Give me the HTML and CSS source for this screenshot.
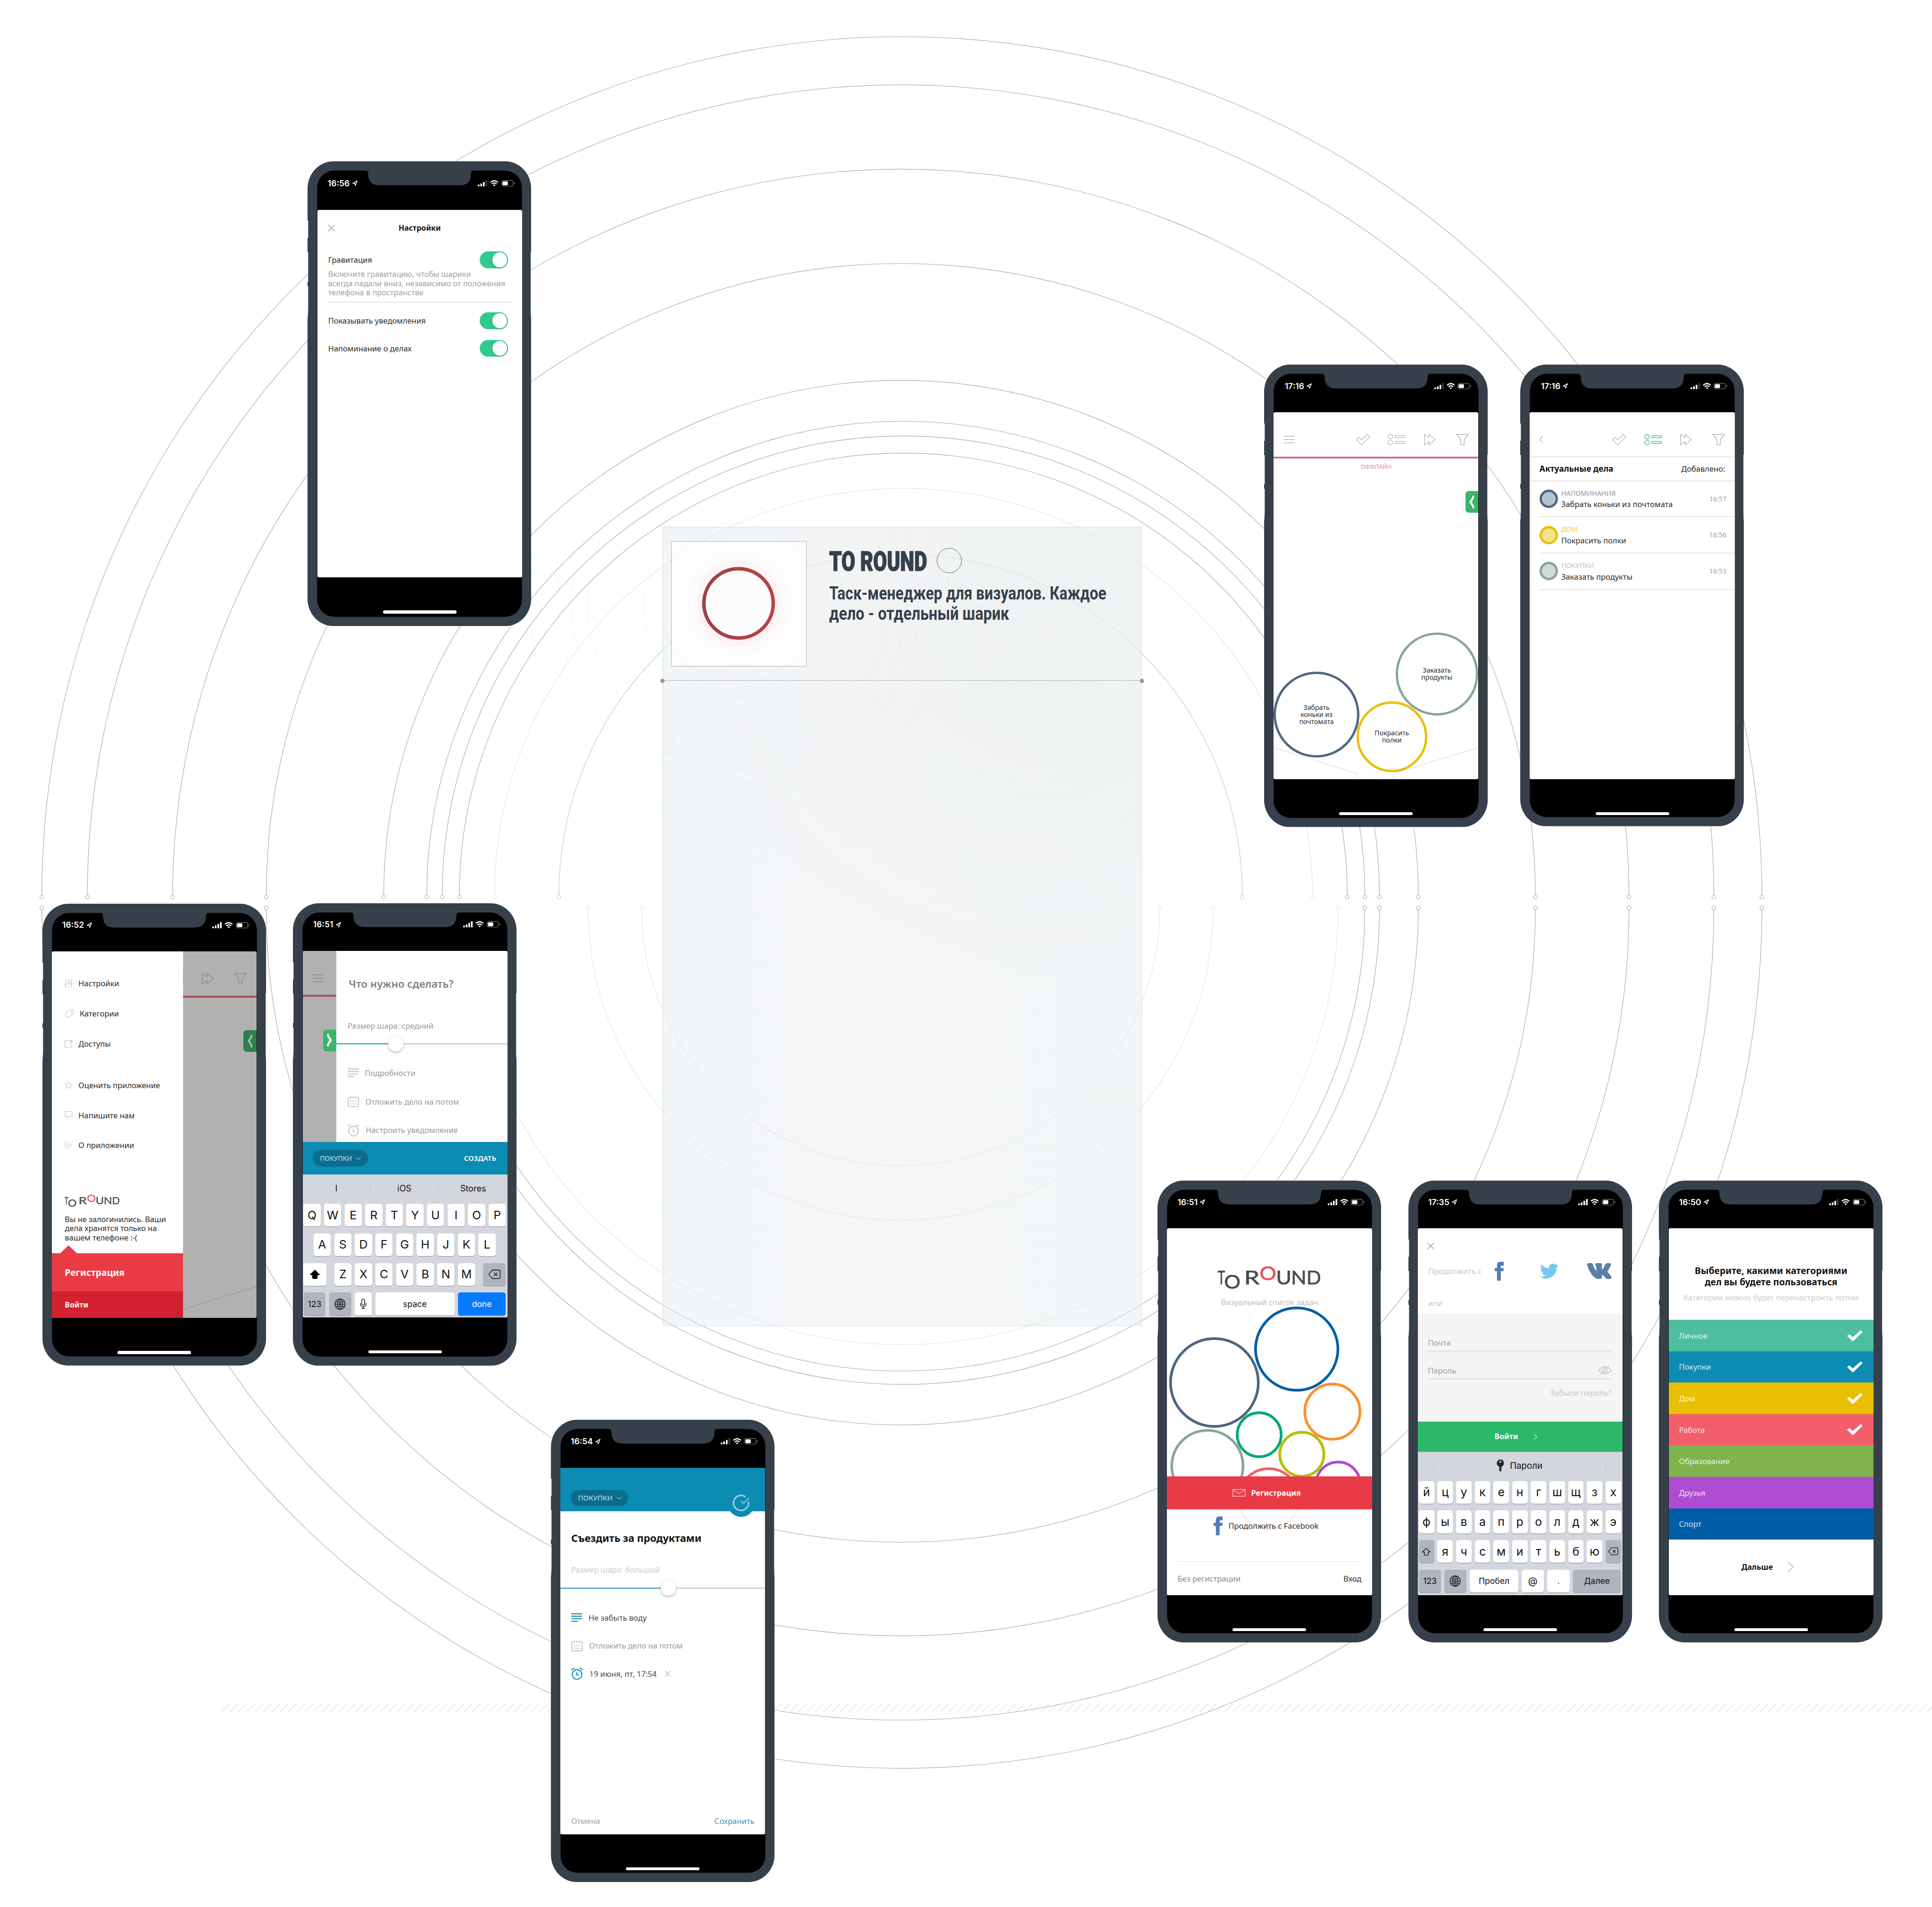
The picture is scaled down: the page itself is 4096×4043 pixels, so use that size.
FILE: index.html
```html
<!DOCTYPE html>
<html lang="ru">
<head>
<meta charset="utf-8">
<title>To Round</title>
<link rel="stylesheet" href="styles.css">
</head>
<body>
<svg class="defs" aria-hidden="true">
  <defs>
    <symbol id="frame" viewBox="0 0 535 1105" preserveAspectRatio="none">
      <path d="M62 0H473A62 65 0 0 1 535 65V215H534V350Q534 368 535 375V1040A62 65 0 0 1 473 1105H62A62 65 0 0 1 0 1040V375Q1 368 1.5 350V297H0V286H1.5V216H0V182H1.5V141H0V65A62 65 0 0 1 62 0Z" fill="#36404a"/>
      <rect x="23" y="22" width="490" height="1061" rx="41" ry="41" fill="#000"/>
      <path d="M139 21V22Q145 22 145 30C145 48 154 57 172 57H364C382 57 391 48 391 30Q391 22 397 22V21Z" fill="#36404a"/>
    </symbol>
    <symbol id="loc" viewBox="0 0 13 14"><path d="M1 7.5L12 1.5L7.5 13L6.5 8Z" fill="none" stroke="#fff" stroke-width="1.8" stroke-linejoin="round"/></symbol>
    <symbol id="sig4" viewBox="0 0 23 15"><g fill="#fff"><rect y="10.5" width="4" height="4.5" rx="1"/><rect x="6.2" y="7.8" width="4" height="7.2" rx="1"/><rect x="12.4" y="4.2" width="4" height="10.8" rx="1"/><rect x="18.6" y="0" width="4" height="15" rx="1"/></g></symbol>
    <symbol id="sig3" viewBox="0 0 23 15"><g fill="#fff"><rect y="10.5" width="4" height="4.5" rx="1"/><rect x="6.2" y="7.8" width="4" height="7.2" rx="1"/><rect x="12.4" y="4.2" width="4" height="10.8" rx="1"/><rect x="18.6" y="0" width="4" height="15" rx="1" fill="#3a3a3a"/></g></symbol>
    <symbol id="wifi" viewBox="0 0 20 15"><g fill="none" stroke="#fff" stroke-width="2.7"><path d="M1 5.2Q10 -2.6 19 5.2"/><path d="M4.3 9.1Q10 4 15.7 9.1"/></g><path d="M7 11.6Q10 9.2 13 11.6L10 14.8Z" fill="#fff"/></symbol>
    <symbol id="batt" viewBox="0 0 33 15"><rect x=".8" y=".8" width="27.6" height="13.4" rx="4" fill="none" stroke="#7a7a7a" stroke-width="1.4"/><rect x="2.8" y="2.8" width="12.6" height="9.4" rx="2" fill="#fff"/><path d="M30.4 5V10Q32.6 9 32.6 7.500Q32.6 6 30.4 5Z" fill="#7a7a7a"/></symbol>
    <symbol id="burger" viewBox="0 0 25 20"><path d="M0 2H25M0 10H25M0 18H25" stroke="currentColor" stroke-width="2"/></symbol>
    <symbol id="back" viewBox="0 0 25 20"><path d="M9.500 2.500L1 10L9.500 17.500" stroke="currentColor" stroke-width="1.8" fill="none"/></symbol>
    <symbol id="check" viewBox="0 0 34 27"><path d="M1 14L7.200 8L13 14L26.600 1L33 7L13.200 26Z" stroke="currentColor" stroke-width="1.7" stroke-linejoin="round" fill="none"/></symbol>
    <symbol id="list" viewBox="0 0 42 27"><g stroke="currentColor" stroke-width="1.8" fill="none"><circle cx="6.500" cy="6.500" r="5.500"/><circle cx="6.500" cy="20.500" r="5.500"/><rect x="18" y="4" width="23" height="4.800" rx="1"/><rect x="18" y="18" width="23" height="4.800" rx="1"/></g></symbol>
    <symbol id="ff" viewBox="0 0 28 27"><path d="M1 1L12 9V1L27 13.500L12 26V18L1 26Z" stroke="currentColor" stroke-width="1.8" stroke-linejoin="round" fill="none"/></symbol>
    <symbol id="funnel" viewBox="0 0 31 27"><path d="M1 1H30L19.500 13V26H11.500V13Z" stroke="currentColor" stroke-width="1.8" stroke-linejoin="round" fill="none"/></symbol>
    <symbol id="close" viewBox="0 0 18 18"><path d="M1 1L17 17M17 1L1 17" stroke="currentColor" stroke-width="2.200"/></symbol>
    <symbol id="chev" viewBox="0 0 12 32"><path d="M9.500 3Q9 8 2.500 16Q9 24 9.500 29" stroke="currentColor" stroke-width="4.600" stroke-linecap="round" stroke-linejoin="round" fill="none"/></symbol>
    <symbol id="down" viewBox="0 0 13 7"><path d="M.8 1Q4 5 6.500 5.500Q9 5 12.200 1" stroke="currentColor" stroke-width="1.500" fill="none"/></symbol>
    <symbol id="notes" viewBox="0 0 26 22"><path d="M0 1.500H26M0 7.500H26M0 13.500H26M0 19.500H16" stroke="currentColor" stroke-width="2.400"/></symbol>
    <symbol id="cal" viewBox="0 0 28 28"><g stroke="currentColor" fill="none" stroke-width="2.400"><path d="M5 4H3.500Q1.500 4 1.500 6V24Q1.500 26.500 4 26.500H24Q26.500 26.500 26.500 24V6Q26.500 4 24.500 4H23M10 4H18M7.500 1V7M20.500 1V7"/><path d="M6.500 13.500H21.500M6.500 20H21.500" stroke-dasharray="3.500 2.250"/></g></symbol>
    <symbol id="alarm" viewBox="0 0 28 30"><g stroke="currentColor" fill="none" stroke-width="2.400"><circle cx="14" cy="17" r="11.500"/><path d="M13.500 11V18H18.500"/><path d="M1 6.500Q3.500 2.500 8 1.500M27 6.500Q24.500 2.500 20 1.500"/></g></symbol>
    <symbol id="tick" viewBox="0 0 37 27"><path d="M0 14L5.500 9.500L13.500 17L33 0L37 4.500L13.800 27Z" fill="#fff"/></symbol>
    <symbol id="fb" viewBox="6 0 12 24" preserveAspectRatio="none"><path d="M9 8h-3v4h3v12h5v-12h3.642l.358-4h-4v-1.667c0-.955.192-1.333 1.115-1.333h2.885v-5h-3.808c-3.596 0-5.192 1.583-5.192 4.615v3.385z" fill="#5479bd"/></symbol>
    <symbol id="tw" viewBox="0 2.200 24 19.600" preserveAspectRatio="none"><path d="M23.953 4.57a10 10 0 01-2.825.775 4.958 4.958 0 002.163-2.723c-.951.555-2.005.959-3.127 1.184a4.92 4.92 0 00-8.384 4.482C7.69 8.095 4.067 6.13 1.64 3.162a4.822 4.822 0 00-.666 2.475c0 1.71.87 3.213 2.188 4.096a4.904 4.904 0 01-2.228-.616v.06a4.923 4.923 0 003.946 4.827 4.996 4.996 0 01-2.212.085 4.936 4.936 0 004.604 3.417 9.867 9.867 0 01-6.102 2.105c-.39 0-.779-.023-1.17-.067a13.995 13.995 0 007.557 2.209c9.053 0 13.998-7.496 13.998-13.985 0-.21 0-.42-.015-.63A9.935 9.935 0 0024 4.59z" fill="#76c7ef"/></symbol>
    <symbol id="vk" viewBox="2 80 572 352" preserveAspectRatio="none"><path d="M545 117.7c3.7-12.5 0-21.7-17.8-21.7h-58.9c-15 0-21.900 7.900-25.600 16.700 0 0-30 73.100-72.400 120.500-13.700 13.700-20 18.100-27.500 18.100-3.700 0-9.400-4.400-9.400-16.900V117.700c0-15-4.200-21.700-16.600-21.700h-92.600c-9.400 0-15 7-15 13.500 0 14.200 21.200 17.500 23.400 57.500v86.800c0 19-3.400 22.500-10.900 22.500-20 0-68.600-73.400-97.400-157.400-5.800-16.300-11.500-22.900-26.600-22.900H38.800c-16.800 0-20.200 7.900-20.200 16.700 0 15.600 20 93.100 93.100 195.500C160.400 378.100 229 416 291.400 416c37.500 0 42.100-8.400 42.100-22.900 0-66.800-3.400-73.100 15.400-73.100 8.700 0 23.700 4.400 58.700 38.100 40 40 46.600 57.900 69 57.900h58.900c16.800 0 25.300-8.400 20.400-25-11.200-34.900-86.900-106.700-90.300-111.500-8.700-11.200-6.200-16.200 0-26.200.1-.1 72-101.300 79.400-135.600z" fill="#5a7fa8" stroke="#5a7fa8" stroke-width="32" stroke-linejoin="round"/></symbol>
    <symbol id="globe" viewBox="0 0 28 28"><g fill="none" stroke="#1a1a1a" stroke-width="1.700"><circle cx="14" cy="14" r="12.800"/><ellipse cx="14" cy="14" rx="6" ry="12.800"/><path d="M14 1V27M1 14H27M3.500 7.500Q14 11.500 24.500 7.500M3.500 20.500Q14 16.500 24.500 20.500"/></g></symbol>
    <symbol id="del" viewBox="0 0 31 24"><g fill="none" stroke="#1a1a1a" stroke-width="1.800"><path d="M10 1.500H26Q29.500 1.500 29.500 5V19Q29.500 22.500 26 22.500H10L1.500 12Z" stroke-linejoin="round"/><path d="M14.500 8L22.500 16M22.500 8L14.500 16"/></g></symbol>
    <symbol id="mic" viewBox="0 0 16 26"><g fill="none" stroke="#111" stroke-width="1.700"><rect x="4.500" y="1" width="7" height="15" rx="3.500"/><path d="M1 11V13Q1 20 8 20T15 13V11M8 20V25M4 25H12"/></g></symbol>
    <symbol id="shift" viewBox="0 0 26 24"><path d="M13 2L2 13H7.500V20.500Q7.500 22 9 22H17Q18.500 22 18.500 20.500V13H24Z" stroke="#000" stroke-width="1.800" stroke-linejoin="round"/></symbol>
    <symbol id="logo" viewBox="0 0 245 57">
      <g font-family="Lato, sans-serif" font-size="46.500" fill="#4a4a4c" stroke="#4a4a4c" stroke-width=".8">
        <text x="-1" y="45.300" textLength="18" lengthAdjust="spacingAndGlyphs">T</text>
        <text x="15" y="55" textLength="39" lengthAdjust="spacingAndGlyphs">O</text>
        <text x="62.500" y="45.300" textLength="37" lengthAdjust="spacingAndGlyphs">R</text>
        <text x="100" y="34.500" textLength="40" lengthAdjust="spacingAndGlyphs" fill="#ea4f56" stroke="#ea4f56">O</text>
        <text x="139" y="45.300" textLength="37" lengthAdjust="spacingAndGlyphs">U</text>
        <text x="175" y="45.300" textLength="37" lengthAdjust="spacingAndGlyphs">N</text>
        <text x="212" y="45.300" textLength="35" lengthAdjust="spacingAndGlyphs">D</text>
      </g>
    </symbol>
    <pattern id="hatch" x="530" y="4075.700" width="20" height="20" patternUnits="userSpaceOnUse"><path d="M.3 19.700L19.700 .3" stroke="#cdd2d3" stroke-width="1.200"/></pattern>
    <linearGradient id="ringGrad"><stop offset="0" stop-color="#9a4345"/><stop offset="1" stop-color="#bb4244"/></linearGradient>
    <radialGradient id="glow"><stop offset=".5" stop-color="#ffdada" stop-opacity="0"/><stop offset=".72" stop-color="#ffdada" stop-opacity=".3"/><stop offset="1" stop-color="#ffdada" stop-opacity="0"/></radialGradient>
  </defs>
</svg>

<main class="board">
  <svg class="orbits" viewBox="0 0 4622 4562">
    <rect x="530" y="4075.700" width="4092" height="20" fill="url(#hatch)"/>
    <g class="orbit">
      <path d="M100 2142A2057.500 2055 0 0 1 4215 2142"/>
      <path d="M209 2142A1945.500 1939 0 0 1 4100 2142"/>
      <path d="M413 2142A1742 1738 0 0 1 3897 2142"/>
      <path d="M637 2142A1518 1512 0 0 1 3673 2142"/>
      <path d="M918 2142A1237.500 1232 0 0 1 3393 2142"/>
      <path d="M1021 2142A1139.500 1134 0 0 1 3300 2142"/>
      <path d="M1058 2142A1103.500 1099 0 0 1 3265 2142"/>
      <path d="M1099 2142A1062 1058 0 0 1 3223 2142"/>
      <path d="M100 2176A2057.500 2055 0 0 0 4215 2176"/>
      <path d="M209 2176A1945.500 1939 0 0 0 4100 2176"/>
      <path d="M413 2176A1742 1738 0 0 0 3897 2176"/>
      <path d="M637 2176A1518 1514 0 0 0 3673 2176"/>
      <path d="M918 2176A1237.500 1233 0 0 0 3393 2176"/>
      <path d="M1021 2176A1139.500 1136 0 0 0 3300 2176"/>
      <path d="M1050 2176A1107.500 1104 0 0 0 3265 2176"/>
      <g>
        <circle cx="100" cy="2146" r="4.500"/><circle cx="209" cy="2146" r="4.500"/><circle cx="413" cy="2146" r="4.500"/><circle cx="637" cy="2146" r="4.500"/><circle cx="918" cy="2146" r="4.500"/><circle cx="1021" cy="2146" r="4.500"/><circle cx="1058" cy="2146" r="4.500"/><circle cx="1099" cy="2146" r="4.500"/>
        <circle cx="4215" cy="2146" r="4.500"/><circle cx="4100" cy="2146" r="4.500"/><circle cx="3897" cy="2146" r="4.500"/><circle cx="3673" cy="2146" r="4.500"/><circle cx="3393" cy="2146" r="4.500"/><circle cx="3300" cy="2146" r="4.500"/><circle cx="3265" cy="2146" r="4.500"/><circle cx="3223" cy="2146" r="4.500"/>
        <circle cx="100" cy="2172" r="4.500"/><circle cx="637" cy="2172" r="4.500"/><circle cx="4215" cy="2172" r="4.500"/><circle cx="4100" cy="2172" r="4.500"/><circle cx="3897" cy="2172" r="4.500"/><circle cx="3673" cy="2172" r="4.500"/><circle cx="3393" cy="2172" r="4.500"/><circle cx="3300" cy="2172" r="4.500"/><circle cx="3265" cy="2172" r="4.500"/>
      </g>
    </g>
    <g class="orbit mid">
      <path d="M1337 2142A817.500 817 0 0 1 2972 2142"/>
      <circle cx="1337" cy="2146" r="4.500"/><circle cx="2972" cy="2146" r="4.500"/>
    </g>
    <g class="orbit light">
      <path d="M1535 2176A619.500 613 0 0 0 2774 2176"/>
      <path d="M1407 2176A747.500 743 0 0 0 2902 2176"/>
      <path d="M1115 2176A1043 1041 0 0 0 3201 2176"/>
      <path d="M1183 2142A978.500 974 0 0 1 3140 2142"/>
      <circle cx="1183" cy="2146" r="4.500"/><circle cx="3140" cy="2146" r="4.500"/>
      <circle cx="1535" cy="2172" r="4.500"/><circle cx="2774" cy="2172" r="4.500"/><circle cx="1407" cy="2172" r="4.500"/><circle cx="2902" cy="2172" r="4.500"/><circle cx="3201" cy="2172" r="4.500"/>
    </g>
  </svg>

  <section class="card">
    <header class="card-head">
      <div class="card-logo">
        <svg viewBox="0 0 323 299"><circle cx="161" cy="149" r="122" fill="url(#glow)"/><circle cx="161" cy="149" r="83.500" fill="#fdfcfc" stroke="url(#ringGrad)" stroke-width="8.500"/></svg>
      </div>
      <div class="card-copy">
        <h1><span>TO ROUND</span><i></i></h1>
        <p><span>Таск-менеджер для визуалов. Каждое</span><br><span>дело - отдельный шарик</span></p>
      </div>
    </header>
  </section>

  <svg class="ripples" viewBox="0 0 1040 1040">
    <g fill="none" stroke="#8a979f" stroke-width="1.400" opacity=".07">
      <path d="M524 1022A502 502 0 1 0 308 975"/>
      <path d="M524 952A432 432 0 1 0 337 911.500"/>
      <path d="M524 920A400 400 0 1 0 351 882.500"/>
      <path d="M524 881.500A361.500 361.500 0 1 0 367 847.600"/>
      <path d="M524 748A228 228 0 1 0 424 726.600"/>
      <path d="M524 709A189 189 0 1 0 440 691.300"/>
      <path d="M524 640A120 120 0 1 0 469 628.800"/>
      <path d="M524 618A98 98 0 1 0 479 608.800"/>
      <circle cx="520" cy="1022" r="4.500"/><circle cx="304" cy="973" r="4.500"/><circle cx="520" cy="952" r="4.500"/><circle cx="333" cy="909" r="4.500"/><circle cx="520" cy="920" r="4.500"/><circle cx="347" cy="880" r="4.500"/><circle cx="520" cy="881" r="4.500"/><circle cx="363" cy="845" r="4.500"/><circle cx="520" cy="748" r="4.500"/><circle cx="421" cy="724" r="4.500"/><circle cx="520" cy="709" r="4.500"/><circle cx="437" cy="689" r="4.500"/><circle cx="520" cy="640" r="4.500"/><circle cx="520" cy="618" r="4.500"/>
    </g>
  </svg>

  <article class="phone p-settings">
    <svg class="frame"><use href="#frame"/></svg>
    <div class="status"><b>16:56</b><svg class="s-loc"><use href="#loc"/></svg><svg class="s-sig"><use href="#sig3"/></svg><svg class="s-wifi"><use href="#wifi"/></svg><svg class="s-batt"><use href="#batt"/></svg></div>
    <div class="app">
      <div class="set-bar"><svg class="ic-close"><use href="#close"/></svg><b>Настройки</b><span></span></div>
      <div class="set-row first"><span>Гравитация</span><i class="toggle"></i></div>
      <p class="set-note">Включите гравитацию, чтобы шарики<br>всегда падали вниз, независимо от положения<br>телефона в пространстве</p>
      <div class="set-row"><span>Показывать уведомления</span><i class="toggle"></i></div>
      <div class="set-row last"><span>Напоминание о делах</span><i class="toggle"></i></div>
    </div>
    <div class="home"></div>
  </article>

  <article class="phone p-balls">
    <svg class="frame"><use href="#frame"/></svg>
    <div class="status"><b>17:16</b><svg class="s-loc"><use href="#loc"/></svg><svg class="s-sig"><use href="#sig3"/></svg><svg class="s-wifi"><use href="#wifi"/></svg><svg class="s-batt"><use href="#batt"/></svg></div>
    <div class="app">
      <div class="tools"><svg class="t-menu"><use href="#burger"/></svg><svg class="t-check"><use href="#check"/></svg><svg class="t-list"><use href="#list"/></svg><svg class="t-ff"><use href="#ff"/></svg><svg class="t-fun"><use href="#funnel"/></svg></div>
      <div class="redline"></div>
      <div class="offline">ОФФЛАЙН</div>
      <div class="tab tab-right"><svg><use href="#chev"/></svg></div>
      <svg class="floor" viewBox="0 0 490 877"><path d="M0 802L200.700 864.500V877M490 802L287.500 864.500V877"/></svg>
      <div class="ball ball-navy">Забрать<br>коньки из<br>почтомата</div>
      <div class="ball ball-yellow">Покрасить<br>полки</div>
      <div class="ball ball-sage">Заказать<br>продукты</div>
    </div>
    <div class="home"></div>
  </article>

  <article class="phone p-list">
    <svg class="frame"><use href="#frame"/></svg>
    <div class="status"><b>17:16</b><svg class="s-loc"><use href="#loc"/></svg><svg class="s-sig"><use href="#sig3"/></svg><svg class="s-wifi"><use href="#wifi"/></svg><svg class="s-batt"><use href="#batt"/></svg></div>
    <div class="app">
      <div class="tools"><svg class="t-menu"><use href="#back"/></svg><svg class="t-check"><use href="#check"/></svg><svg class="t-list on"><use href="#list"/></svg><svg class="t-ff"><use href="#ff"/></svg><svg class="t-fun"><use href="#funnel"/></svg></div>
      <div class="list-head"><b>Актуальные дела</b><span>Добавлено:</span></div>
      <div class="task navy"><i></i><div><small>НАПОМИНАНИЯ</small>Забрать коньки из почтомата</div><time>16:57</time></div>
      <div class="task yellow"><i></i><div><small>ДОМ</small>Покрасить полки</div><time>16:56</time></div>
      <div class="task sage"><i></i><div><small>ПОКУПКИ</small>Заказать продукты</div><time>16:53</time></div>
    </div>
    <div class="home"></div>
  </article>

  <article class="phone p-menu">
    <svg class="frame"><use href="#frame"/></svg>
    <div class="status"><b>16:52</b><svg class="s-loc"><use href="#loc"/></svg><svg class="s-sig"><use href="#sig4"/></svg><svg class="s-wifi"><use href="#wifi"/></svg><svg class="s-batt"><use href="#batt"/></svg></div>
    <div class="app dim">
      <div class="tools"><svg class="t-menu"><use href="#burger"/></svg><svg class="t-check"><use href="#check"/></svg><svg class="t-list"><use href="#list"/></svg><svg class="t-ff"><use href="#ff"/></svg><svg class="t-fun"><use href="#funnel"/></svg></div>
      <div class="redline"></div>
      <div class="tab tab-right"><svg><use href="#chev"/></svg></div>
      <svg class="floor" viewBox="0 0 490 877"><path d="M490 802L287.500 864.500V877"/></svg>
      <div class="drawer">
        <nav>
          <a><svg viewBox="0 0 19 20"><path d="M3 0V8M3 12V20M9.500 0V5M9.500 9V20M16 0V8M16 12V20" stroke="currentColor" stroke-width="2" stroke-dasharray="3 1.500"/><circle cx="3" cy="12" r="2.600" fill="currentColor"/><circle cx="9.500" cy="7.500" r="2.300" fill="currentColor"/><circle cx="16" cy="11" r="2.600" fill="currentColor"/></svg>Настройки</a>
          <a class="wide"><svg viewBox="0 0 22 20"><path d="M1 12L10 2Q11 1 12.500 1H18Q21 1 21 4V8Q21 9 20 10L10 19Q8 20 6 18L1.500 14Q.5 13 1 12Z" fill="none" stroke="currentColor" stroke-width="1.500"/><circle cx="15.500" cy="6" r="1.800" fill="currentColor"/></svg>Категории</a>
          <a><svg viewBox="0 0 19 20"><path d="M10 2H4Q1 2 1 5V16Q1 19 4 19H14Q17 19 17 16V9" fill="none" stroke="currentColor" stroke-width="1.500"/><circle cx="15.500" cy="4" r="3.200" fill="currentColor"/></svg>Доступы</a>
          <a class="gap"><svg viewBox="0 0 20 20"><path d="M10 1.500L12.600 7.300L19 8L14.200 12.200L15.600 18.500L10 15.200L4.400 18.500L5.800 12.200L1 8L7.400 7.300Z" fill="none" stroke="currentColor" stroke-width="1.500"/></svg>Оценить приложение</a>
          <a><svg viewBox="0 0 19 20"><path d="M4 1.500H15Q18 1.500 18 4.500V10.500Q18 13.500 15 13.500H10L6 18V13.500H4Q1 13.500 1 10.500V4.500Q1 1.500 4 1.500Z" fill="none" stroke="currentColor" stroke-width="1.500"/></svg>Напишите нам</a>
          <a><svg viewBox="0 0 19 20"><path d="M0 3H7M0 7.500H17M0 12H17M0 16.500H12" stroke="currentColor" stroke-width="1.500"/></svg>О приложении</a>
        </nav>
        <svg class="logo-s"><use href="#logo"/></svg>
        <p>Вы не залогинились. Ваши<br>дела хранятся только на<br>вашем телефоне :-(</p>
        <div class="reg">Регистрация</div>
        <div class="login">Войти</div>
      </div>
    </div>
    <div class="home"></div>
  </article>

  <article class="phone p-new">
    <svg class="frame"><use href="#frame"/></svg>
    <div class="status"><b>16:51</b><svg class="s-loc"><use href="#loc"/></svg><svg class="s-sig"><use href="#sig4"/></svg><svg class="s-wifi"><use href="#wifi"/></svg><svg class="s-batt"><use href="#batt"/></svg></div>
    <div class="app">
      <div class="split">
        <div class="strip"><div class="tools"><svg class="t-menu"><use href="#burger"/></svg></div><div class="redline"></div><div class="tab tab-left"><svg><use href="#chev"/></svg></div></div>
        <div class="sheet">
          <h2>Что нужно сделать?</h2>
          <div class="size">Размер шара: средний</div>
          <div class="slider"><i></i><u></u><s></s></div>
          <div class="opt"><svg class="o-notes"><use href="#notes"/></svg>Подробности</div>
          <div class="opt"><svg class="o-cal"><use href="#cal"/></svg>Отложить дело на потом</div>
          <div class="opt"><svg class="o-alarm"><use href="#alarm"/></svg>Настроить уведомление</div>
        </div>
      </div>
      <div class="create"><span class="pill">ПОКУПКИ<svg><use href="#down"/></svg></span><b>СОЗДАТЬ</b></div>
      <div class="kb kb-en">
        <div class="hints"><span>I</span><span>iOS</span><span>Stores</span></div>
        <div class="keys"><kbd>Q</kbd><kbd>W</kbd><kbd>E</kbd><kbd>R</kbd><kbd>T</kbd><kbd>Y</kbd><kbd>U</kbd><kbd>I</kbd><kbd>O</kbd><kbd>P</kbd></div>
        <div class="keys"><kbd>A</kbd><kbd>S</kbd><kbd>D</kbd><kbd>F</kbd><kbd>G</kbd><kbd>H</kbd><kbd>J</kbd><kbd>K</kbd><kbd>L</kbd></div>
        <div class="keys spread"><kbd class="k55"><svg class="k-shift"><use href="#shift"/></svg></kbd><div class="keys"><kbd>Z</kbd><kbd>X</kbd><kbd>C</kbd><kbd>V</kbd><kbd>B</kbd><kbd>N</kbd><kbd>M</kbd></div><kbd class="k55 alt"><svg class="k-del"><use href="#del"/></svg></kbd></div>
        <div class="keys"><kbd class="k53 alt txt">123</kbd><kbd class="k53 alt"><svg class="k-globe"><use href="#globe"/></svg></kbd><kbd><svg class="k-mic"><use href="#mic"/></svg></kbd><kbd class="k189 txt">space</kbd><kbd class="k114 blue txt">done</kbd></div>
      </div>
    </div>
    <div class="home"></div>
  </article>

  <article class="phone p-edit">
    <svg class="frame"><use href="#frame"/></svg>
    <div class="status"><b>16:54</b><svg class="s-loc"><use href="#loc"/></svg><svg class="s-sig"><use href="#sig3"/></svg><svg class="s-wifi"><use href="#wifi"/></svg><svg class="s-batt"><use href="#batt"/></svg></div>
    <div class="app edit">
      <div class="edit-head"><span class="pill">ПОКУПКИ<svg><use href="#down"/></svg></span>
        <svg class="done" viewBox="0 0 66 66"><circle cx="33" cy="33" r="32.500" fill="#0c8bb3"/><path d="M43.500 17.500A18 18 0 1 0 50.500 29" fill="none" stroke="#a5d3e3" stroke-width="3.400"/><path d="M33 26.500L38.500 33L51.500 20.500" fill="none" stroke="#6dbad2" stroke-width="3.400"/></svg></div>
      <h2>Съездить за продуктами</h2>
      <div class="size">Размер шара: большой</div>
      <div class="slider"><i></i><u></u><s></s></div>
      <div class="opt set"><svg class="o-notes"><use href="#notes"/></svg>Не забыть воду</div>
      <div class="opt"><svg class="o-cal"><use href="#cal"/></svg>Отложить дело на потом</div>
      <div class="opt set"><svg class="o-alarm"><use href="#alarm"/></svg>19 июня, пт, 17:54<svg class="o-x"><use href="#close"/></svg></div>
      <div class="edit-foot"><span>Отмена</span><a>Сохранить</a></div>
    </div>
    <div class="home"></div>
  </article>

  <article class="phone p-start">
    <svg class="frame"><use href="#frame"/></svg>
    <div class="status"><b>16:51</b><svg class="s-loc"><use href="#loc"/></svg><svg class="s-sig"><use href="#sig4"/></svg><svg class="s-wifi"><use href="#wifi"/></svg><svg class="s-batt"><use href="#batt"/></svg></div>
    <div class="app start">
      <svg class="balls" viewBox="0 0 490 877">
        <g fill="none" stroke-width="6.400">
          <circle cx="113.600" cy="369" r="105" stroke="#4c6880"/>
          <circle cx="310.500" cy="289" r="98.500" stroke="#005ea6"/>
          <circle cx="395.800" cy="438.800" r="66" stroke="#fd8f2b"/>
          <circle cx="96.800" cy="568.800" r="85.300" stroke="#88a59c"/>
          <circle cx="220.700" cy="494" r="52.600" stroke="#04a777"/>
          <circle cx="322.700" cy="540.700" r="52.800" stroke="#b3bf05"/>
          <circle cx="243.400" cy="647.500" r="72.300" stroke="#f25e6a"/>
          <circle cx="409.500" cy="612" r="52.800" stroke="#ae4bd1"/>
        </g>
      </svg>
      <svg class="logo-l"><use href="#logo"/></svg>
      <div class="tagline">Визуальный список задач</div>
      <div class="signup"><svg viewBox="0 0 31 18"><path d="M.8 .8H30.200V17.200H.8ZM.8 .8L15.500 11L30.200 .8" fill="none" stroke="#fbd3d5" stroke-width="1.500"/></svg>Регистрация</div>
      <div class="below">
        <div class="fb-row"><svg><use href="#fb"/></svg>Продолжить с Facebook</div>
        <div class="start-foot"><span>Без регистрации</span><b>Вход</b></div>
      </div>
    </div>
    <div class="home"></div>
  </article>

  <article class="phone p-login">
    <svg class="frame"><use href="#frame"/></svg>
    <div class="status"><b>17:35</b><svg class="s-loc"><use href="#loc"/></svg><svg class="s-sig"><use href="#sig4"/></svg><svg class="s-wifi"><use href="#wifi"/></svg><svg class="s-batt"><use href="#batt"/></svg></div>
    <div class="app">
      <div class="social">
        <svg class="ic-close"><use href="#close"/></svg>
        <div class="social-row"><span>Продолжить с</span><svg class="i-fb"><use href="#fb"/></svg><svg class="i-tw"><use href="#tw"/></svg><svg class="i-vk"><use href="#vk"/></svg></div>
        <div class="or">или</div>
      </div>
      <div class="form">
        <div class="field">Почта</div>
        <div class="field">Пароль<svg viewBox="0 0 34 25"><g fill="none" stroke="currentColor" stroke-width="2.200"><path d="M1.500 13Q9 3.500 17 3.500T32.500 13Q25 21.500 17 21.500T1.500 13Z"/><circle cx="17" cy="12.500" r="6"/><path d="M6.500 23.500L28 1M13 16L21 8.500"/></g></svg></div>
        <div class="forgot">Забыли пароль?</div>
      </div>
      <div class="enter">Войти<svg viewBox="0 0 8 14"><path d="M.8 .8L7 7L.8 13.200" fill="none" stroke="#d5f0e1" stroke-width="1.400"/></svg></div>
      <div class="kb kb-ru">
        <div class="hints"><span></span><span><svg viewBox="0 0 18 30"><path d="M9 0A9 9 0 0 1 12.500 17.200V19.500L10.500 21L12.500 23L10.500 25L12.500 27L9.500 30L6.500 27.500V17.500A9 9 0 0 1 9 0ZM9 3A2.500 2.500 0 1 0 9 8A2.500 2.500 0 1 0 9 3Z" fill="#222529" fill-rule="evenodd"/></svg>Пароли</span><span></span></div>
        <div class="keys"><kbd>й</kbd><kbd>ц</kbd><kbd>у</kbd><kbd>к</kbd><kbd>е</kbd><kbd>н</kbd><kbd>г</kbd><kbd>ш</kbd><kbd>щ</kbd><kbd>з</kbd><kbd>х</kbd></div>
        <div class="keys"><kbd>ф</kbd><kbd>ы</kbd><kbd>в</kbd><kbd>а</kbd><kbd>п</kbd><kbd>р</kbd><kbd>о</kbd><kbd>л</kbd><kbd>д</kbd><kbd>ж</kbd><kbd>э</kbd></div>
        <div class="keys"><kbd class="alt"><svg class="k-shift line"><use href="#shift"/></svg></kbd><kbd>я</kbd><kbd>ч</kbd><kbd>с</kbd><kbd>м</kbd><kbd>и</kbd><kbd>т</kbd><kbd>ь</kbd><kbd>б</kbd><kbd>ю</kbd><kbd class="alt"><svg class="k-del"><use href="#del"/></svg></kbd></div>
        <div class="keys"><kbd class="k53 alt txt">123</kbd><kbd class="k54 alt"><svg class="k-globe"><use href="#globe"/></svg></kbd><kbd class="k116 txt">Пробел</kbd><kbd class="k54 at">@</kbd><kbd class="k54 txt">.</kbd><kbd class="k114 alt txt">Далее</kbd></div>
      </div>
    </div>
    <div class="home"></div>
  </article>

  <article class="phone p-cats">
    <svg class="frame"><use href="#frame"/></svg>
    <div class="status"><b>16:50</b><svg class="s-loc"><use href="#loc"/></svg><svg class="s-sig"><use href="#sig3"/></svg><svg class="s-wifi"><use href="#wifi"/></svg><svg class="s-batt"><use href="#batt"/></svg></div>
    <div class="app">
      <div class="cats-head"><h2>Выберите, какими категориями<br>дел вы будете пользоваться</h2><p>Категории можно будет перенастроить потом</p></div>
      <ul class="cats">
        <li class="c1">Личное<svg><use href="#tick"/></svg></li>
        <li class="c2">Покупки<svg><use href="#tick"/></svg></li>
        <li class="c3">Дом<svg><use href="#tick"/></svg></li>
        <li class="c4">Работа<svg><use href="#tick"/></svg></li>
        <li class="c5">Образование</li>
        <li class="c6">Друзья</li>
        <li class="c7">Спорт</li>
      </ul>
      <div class="next">Дальше<svg viewBox="0 0 16 28"><path d="M1 1L15 14L1 27" fill="none" stroke="#bbb" stroke-width="1.900"/></svg></div>
    </div>
    <div class="home"></div>
  </article>
</main>
</body>
</html>
```
FILE: styles.css
```css
* { box-sizing: border-box; }
html, body { margin: 0; }
body {
  width: 4096px;
  height: 4043px;
  overflow: hidden;
  background: #fff;
  color: #2b2b2b;
  font-family: "Noto Sans", sans-serif;
}
svg { display: block; overflow: visible; flex: none; }
.defs { position: absolute; width: 0; height: 0; }
.board {
  position: relative;
  width: 4622px;
  height: 4562px;
  zoom: 0.8862;
  overflow: hidden;
}

/* background */
.orbits { position: absolute; inset: 0; width: 4622px; height: 4562px; }
.orbit { fill: none; stroke: #a6a9ab; stroke-width: 1.3; }
.orbit.mid { stroke: #c4c7c9; }
.orbit.light { stroke: #e0e2e3; }
.ripples { position: absolute; left: 1246.500px; top: 922px; width: 1040px; height: 1040px; }

/* centre card */
.card {
  position: absolute;
  left: 1585px;
  top: 1260px;
  width: 1147px;
  height: 1912px;
  border: 1.500px solid #d8dcde;
  background:
    radial-gradient(circle at 78% 12%, rgba(232, 235, 233, .4), rgba(232, 235, 233, 0) 45%),
    linear-gradient(90deg, rgba(226, 235, 242, .46), rgba(234, 236, 240, .48) 40%, rgba(230, 237, 240, .5));
}
.card-head {
  display: flex;
  height: 367.500px;
  padding: 33px 20px 0 20px;
  border-bottom: 2px solid #abaeb0;
  position: relative;
}
.card-head::before, .card-head::after {
  content: "";
  position: absolute;
  bottom: -6px;
  width: 10px;
  height: 10px;
  border-radius: 50%;
  background: #93979a;
}
.card-head::before { left: -6px; }
.card-head::after { right: -6px; }
.card-logo {
  width: 324px;
  height: 300px;
  border: 1.500px solid #a9b1b9;
  background: rgba(255, 255, 255, .8);
}
.card-logo svg { width: 321px; height: 297px; }
.card-copy { margin-left: 54px; color: #36404a; font-family: Roboto, sans-serif; }
.card-copy h1 {
  display: flex;
  align-items: center;
  height: 62px;
  margin: 16px 0 0;
  font-size: 64px;
  font-weight: 900;
  line-height: 62px;
}
.card-copy h1 span { position: relative; top: 3px; width: 258px; white-space: nowrap; transform: scaleX(.745); transform-origin: 0 50%; -webkit-text-stroke: 1.800px #36404a; }
.card-copy h1 i { width: 60px; height: 60px; border: 1.500px solid #56616c; border-radius: 50%; }
.card-copy p { margin: 24px 0 0; font-size: 43px; font-weight: 700; line-height: 48.500px; white-space: nowrap; }
.card-copy p span { display: inline-block; transform: scaleX(.834); transform-origin: 0 50%; }
.card-copy p span:last-child { transform: scaleX(.85); }

/* phone shell */
.phone {
  position: absolute;
  display: flex;
  flex-direction: column;
  width: 535px;
  height: 1105px;
  padding: 0 22px 0 23px;
}
.frame { position: absolute; left: 0; top: 0; width: 535px; height: 100%; }
.status { position: relative; display: flex; align-items: center; height: 114.300px; padding: 0 17px 12px 25px; flex: none; color: #fff; }
.status b { margin-right: 6px; font: 600 19.800px/20px Inter, sans-serif; }
.s-loc { width: 12.500px; height: 14px; margin-right: auto; }
.s-sig { width: 23px; height: 15px; margin-right: 6.500px; }
.s-wifi { width: 20px; height: 15px; margin-right: 6.500px; }
.s-batt { width: 33px; height: 15px; }
.app {
  position: relative;
  display: flex;
  flex-direction: column;
  height: 877px;
  flex: none;
  background: #fff;
  border-radius: 4px;
  overflow: hidden;
  font-size: 18.600px;
  line-height: 24px;
}
.home { position: relative; width: 176px; height: 7px; margin: 79px auto 0; border-radius: 4px; background: #fff; }

.p-settings { left: 736px; top: 386px; height: 1112px; }
.p-settings .status { height: 116.700px; }
.p-settings .app { height: 879px; }
.p-balls { left: 3024px; top: 872.500px; height: 1106.500px; }
.p-list { left: 3637px; top: 872.500px; height: 1104.500px; }
.p-balls .status, .p-list .status { padding-left: 26.500px; }
.p-menu { left: 101px; top: 2162px; }
.p-new { left: 701px; top: 2160.500px; height: 1106.500px; }
.p-edit { left: 1317.500px; top: 3397px; height: 1106px; }
.p-start { left: 2769px; top: 2824.500px; }
.p-login { left: 3369px; top: 2824.500px; }
.p-cats { left: 3969px; top: 2824.500px; }

/* shared pieces */
.tools { display: flex; align-items: center; height: 105.300px; padding: 25px 0 0 24.700px; flex: none; color: #bcbcbc; }
.t-menu { width: 25px; height: 20px; }
.t-check { width: 34px; height: 27px; margin-left: 147.500px; }
.t-list { width: 42px; height: 27px; margin-left: 42px; }
.t-ff { width: 28px; height: 27px; margin-left: 44px; }
.t-fun { width: 31px; height: 27px; margin-left: 49px; }
.on { color: #4fbf85; }
.redline { height: 4.500px; background: #e8606c; flex: none; border-top: 1.200px solid #c9a0a4; }
.tab { position: absolute; top: 188px; display: grid; place-items: center; width: 31.500px; height: 52px; background: #3cb56b; color: #fff; }
.tab svg { width: 12px; height: 32px; }
.tab-right { right: 0; border-radius: 8px 0 0 8px; }
.tab-left { right: 0; border-radius: 8px 0 0 8px; }
.tab-left svg { transform: scaleX(-1); }
.ic-close { width: 17px; height: 17px; color: #b0b0b0; }
.pill {
  display: inline-flex;
  align-items: center;
  height: 38.800px;
  border-radius: 20px;
  background: #0a6d8d;
  color: #cfe4ec;
}
.pill svg { width: 12.500px; height: 7px; color: #8fc0d1; }
.slider { display: flex; align-items: center; height: 36px; flex: none; }
.slider i { height: 2.600px; background: #1b8fb6; }
.slider u { width: 36px; height: 36px; border-radius: 50%; background: #fff; box-shadow: 0 3px 7px rgba(0, 0, 0, .25); }
.slider s { flex: 1; height: 2.600px; background: #c4c4c4; }
.opt { display: flex; align-items: center; height: 30px; flex: none; color: #999; }
.opt svg { color: #c6c6c6; }
.o-notes { width: 26px; height: 22px; }
.o-cal { width: 27.500px; height: 27.500px; }
.o-alarm { width: 28px; height: 30px; }

/* settings */
.set-bar { display: grid; grid-template-columns: 1fr auto 1fr; align-items: center; height: 86px; padding: 0 25px; color: #111; }
.set-bar b { font-size: 18px; }
.set-row { display: flex; justify-content: space-between; align-items: center; height: 40px; margin-top: 24.500px; padding: 0 33.500px 0 26px; }
.set-row.first { margin-top: 13px; }
.set-row.last { margin-top: 26px; }
.toggle { display: flex; justify-content: flex-end; align-items: center; width: 67.500px; height: 40px; padding-right: 2.500px; border-radius: 20px; background: #30cb8c; }
.toggle::after { content: ""; width: 35.500px; height: 35.500px; border-radius: 50%; background: #fff; box-shadow: 0 2px 5px rgba(0, 0, 0, .2); }
.set-note { margin: 3px 26px 0 25px; padding: 0 0 11px 1px; border-bottom: 1.500px solid #cacaca; color: #a0a0a0; font-size: 18.500px; line-height: 22px; white-space: nowrap; }

/* balls */
.offline { margin-top: 8px; text-align: center; color: #e9868f; font-size: 14.200px; }
.floor { position: absolute; inset: 0; width: 490px; height: 877px; fill: none; stroke: #dcdcdc; stroke-width: 1.500; }
.ball { position: absolute; display: flex; align-items: center; justify-content: center; border: 6.300px solid; border-radius: 50%; text-align: center; font-size: 16px; line-height: 16.800px; white-space: nowrap; }
.ball-navy { left: 0; top: 620.500px; width: 205px; height: 205px; border-color: #4c6880; }
.ball-sage { left: 291.500px; top: 526.500px; width: 198px; height: 198px; border-color: #88a59c; }
.ball-yellow { left: 198px; top: 691px; width: 169.500px; height: 169.500px; border-color: #e9bf06; }

/* task list */
.list-head { display: flex; justify-content: space-between; align-items: center; height: 58.500px; padding: 0 23px; border: solid #cfcfcf; border-width: 1.500px 0; flex: none; }
.p-list .tools { padding-left: 22.500px; }
.p-list .t-check { margin-left: 149.700px; }
.list-head b { font-size: 19.700px; color: #111; }
.task { display: flex; align-items: center; height: 86.500px; margin-left: 22.500px; padding-right: 20px; border-bottom: 1.500px solid #d0d0d0; flex: none; }
.task i { width: 44px; height: 44px; border: 6px solid; border-radius: 50%; margin-left: 1px; }
.task div { margin-left: 7.500px; line-height: 27px; }
.task small { display: block; font-size: 16.200px; }
.task time { margin-left: auto; color: #a0a0a0; font-size: 16px; }
.navy i { border-color: #4c6880; background: #b7c3cd; }
.navy small { color: #8795a5; }
.yellow i { border-color: #e9bf06; background: #f6e28f; }
.yellow small { color: #eccb45; }
.sage i { border-color: #88a59c; background: #cfdbd8; }
.sage small { color: #b2c4be; }

/* side menu */
.dim { background: #b1b1b1; }
.dim .tools { color: #8d8d8d; }
.dim .redline, .strip .redline { background: #a8494f; border-top-color: #8f6a6c; }
.dim .tab { background: #2a814c; color: #b1b1b1; }
.dim .floor { stroke: #9a9a9a; }
.drawer { position: absolute; left: 0; top: 0; bottom: 0; display: flex; flex-direction: column; width: 313.300px; background: #fff; }
.drawer nav { display: flex; flex-direction: column; padding: 64.500px 0 0 30.700px; }
.drawer nav a { display: flex; align-items: center; gap: 14px; height: 24px; margin-bottom: 48px; }
.drawer nav a.gap { margin-top: 27px; }
.drawer nav svg { width: 19px; height: 20px; color: #cacaca; }
.drawer nav .wide svg { width: 22px; }
.logo-s { width: 131px; height: 30.500px; margin: 57px 0 0 30.700px; }
.drawer p { margin: 18px 0 0 31px; line-height: 22px; white-space: nowrap; font-size: 18.500px; }
.reg { position: relative; height: 91.600px; margin-top: auto; padding-left: 31px; background: #e93b45; color: #fff; font-size: 21.900px; font-weight: 700; line-height: 93px; }
.reg::before { content: ""; position: absolute; left: 19px; top: -19px; width: 42px; height: 20px; background: #e93b45; clip-path: polygon(50% 0, 100% 100%, 0 100%); }
.login { height: 63.500px; padding-left: 31px; background: #d22030; color: #fff; font-size: 18px; font-weight: 700; line-height: 64px; }

/* new task */
.split { display: flex; height: 457px; flex: none; }
.strip { position: relative; width: 80.300px; background: #b1b1b1; }
.strip .tools { color: #8d8d8d; }
.sheet { flex: 1; overflow: hidden; }
.sheet h2 { margin: 64px 0 0 30px; color: #7e7e7e; font-size: 25.100px; font-weight: 600; line-height: 30px; }
.sheet .size { margin: 73.500px 0 0 27.300px; color: #9a9a9a; }
.sheet .slider { margin-top: 13.300px; }
.sheet .slider i { width: 124.500px; }
.sheet .opt { margin: 38.500px 0 0 27.500px; }
.sheet .slider + .opt { margin-top: 36px; }
.opt svg:first-child { margin-right: 15px; }
.create { display: flex; justify-content: space-between; align-items: center; height: 78.400px; padding: 0 27px 0 24.400px; background: #0c8bb3; color: #fff; flex: none; }
.create .pill { width: 131.300px; padding-left: 17px; font-size: 15.800px; }
.create .pill svg { margin-left: 9px; }
.create b { font-size: 17px; font-weight: 600; }

/* keyboards */
.kb { display: flex; flex-direction: column; gap: 16.600px; flex: 1; background: #d3d6dc; color: #111; font-family: Inter, sans-serif; }
.hints { display: grid; grid-template-columns: 162px 164px 1fr; align-items: center; height: 53px; padding-top: 14px; font-size: 20.500px; text-align: center; }
.hints span { display: flex; align-items: center; justify-content: center; height: 32px; border-right: 1.500px solid #bfc2c8; }
.hints span:last-child { border: 0; }
.keys { display: flex; gap: 8.200px; justify-content: center; padding: 0 2px; }
kbd {
  display: flex;
  align-items: center;
  justify-content: center;
  width: 41.100px;
  height: 54.300px;
  border-radius: 6px;
  background: #fff;
  box-shadow: 0 1.500px 0 #9a9da3;
  font: 400 28px/1 Inter, sans-serif;
}
.kb-en .keys { padding-right: 4px; }
.kb-en .keys .keys { padding: 0; }
.spread { justify-content: space-between; }
kbd.alt { background: #b0b4be; }
kbd.blue { background: #067aff; color: #fff; }
kbd.txt { font-size: 19.800px; }
kbd.k55 { width: 54.700px; }
kbd.k53 { width: 53px; }
kbd.k54 { width: 54px; }
kbd.k189 { width: 189.500px; }
kbd.k114 { width: 114.300px; }
kbd.k116 { width: 115.800px; }
kbd.at { font-size: 23px; }
.k-shift { width: 26px; height: 24px; }
.k-shift.line { width: 22px; fill: none; }
.k-del { width: 30px; height: 24px; }
.kb-ru .k-del { width: 25px; height: 20px; }
.k-globe { width: 27px; height: 27px; }
.k-mic { width: 16px; height: 25px; }
.kb-ru kbd { width: 37px; }
.kb-ru kbd.k53 { width: 52.500px; }
.kb-ru kbd.k54 { width: 54px; }
.kb-ru kbd.k116 { width: 115.800px; }
.kb-ru kbd.k114 { width: 114.300px; }
.kb-ru .keys { gap: 7.700px; padding-right: 4px; }
.kb-ru .hints { grid-template-columns: 38px 412px 1fr; font-size: 21.100px; }
.kb-ru .hints svg { width: 17.500px; height: 30px; margin: 0 14px 0 0; }

/* edit task */
.edit-head { position: relative; height: 104px; padding: 53px 25px 0; background: #0c8bb3; flex: none; }
.edit-head .pill { width: 137.500px; padding-left: 17.500px; font-size: 17px; }
.edit-head .pill svg { margin-left: 9px; }
.done { position: absolute; left: 399.500px; top: 52.500px; width: 66px; height: 66px; }
.edit h2 { margin: 49.700px 0 0 26px; color: #111; font-size: 24.400px; font-weight: 700; line-height: 30px; }
.edit .size { margin: 48px 0 0 26px; color: #cbcbcb; }
.edit .slider { margin-top: 14.400px; }
.edit .slider i { width: 240px; }
.edit .opt { margin: 37.300px 0 0 26.500px; }
.edit .opt.set { color: #4a4a4a; }
.edit .opt.set svg { color: #0c8bb3; }
.edit .opt.set .o-x { width: 14.500px; height: 14.500px; margin-left: 19px; color: #bdbdbd; }
.edit-foot { display: flex; justify-content: space-between; margin: auto 26px 20px; color: #a3a3a3; }
.edit-foot a { color: #3898b9; }

/* start */
.balls { position: absolute; inset: 0; width: 490px; height: 877px; }
.logo-l { position: relative; width: 245px; height: 57px; margin: 88.500px 0 0 122px; }
.tagline { position: relative; margin-top: 18.500px; text-align: center; color: #c0c0c0; font-size: 18.500px; }
.signup { position: relative; display: flex; align-items: center; justify-content: center; gap: 14px; height: 79.200px; margin-top: 405.300px; padding-right: 14px; background: #e93b45; color: #fff; font-size: 18.200px; font-weight: 700; flex: none; }
.signup svg { width: 31px; height: 18px; }
.below { position: relative; display: flex; flex-direction: column; flex: 1; background: rgba(255, 255, 255, .9); }
.fb-row { display: flex; align-items: center; height: 45px; margin: 16.500px 0 0 111px; }
.fb-row svg { width: 21.500px; height: 45px; margin-right: 14.500px; }
.start-foot { display: flex; justify-content: space-between; margin: auto 25px 0; padding: 29px 0 27px; border-top: 1.500px solid #e4e4e4; color: #8c8c8c; }
.start-foot b { color: #2b2b2b; font-weight: 400; }

/* login */
.social { height: 202.200px; padding: 33.500px 26px 0 23px; color: #c6c6c6; }
.social-row { display: flex; align-items: center; height: 45px; margin: 29px 0 0 2px; }
.social-row span { width: 159.500px; }
.i-fb { width: 21.500px; height: 45px; }
.i-tw { width: 44px; height: 36px; margin-left: 86.500px; }
.i-vk { width: 58px; height: 38px; margin-left: 69px; }
.or { margin: 42px 0 0 2px; }
.form { height: 260.300px; padding: 52.500px 26px 0 24px; background: #f5f5f5; color: #9c9c9c; }
.field { display: flex; justify-content: space-between; align-items: center; height: 39.500px; border-bottom: 1.500px solid #cacaca; }
.field + .field { height: 40px; margin-top: 26px; }
.field svg { width: 33px; height: 24.500px; color: #c9c9c9; }
.forgot { margin-top: 20.500px; text-align: right; color: #c6c6c6; padding-right: 1px; }
.enter { display: flex; align-items: center; gap: 38px; height: 72px; padding-left: 183.500px; background: #2cb869; color: #fff; font-size: 18px; font-weight: 700; flex: none; }
.enter svg { width: 8px; height: 14px; }

/* categories */
.cats-head { height: 218.800px; padding-top: 87.500px; text-align: center; flex: none; }
.cats-head h2 { margin: 0; color: #111; font-size: 21.900px; font-weight: 700; line-height: 26.900px; }
.cats-head p { margin: 11.500px 0 0; color: #cdcdcd; font-size: 18.800px; white-space: nowrap; }
.cats { margin: 0; padding: 0; list-style: none; color: rgba(255, 255, 255, .85); }
.cats li { display: flex; justify-content: space-between; align-items: center; height: 75.100px; padding: 0 26.500px 0 24.500px; }
.cats svg { width: 37px; height: 27px; }
.c1 { background: #4dbf9f; }
.c2 { background: #0c8bb3; }
.c3 { background: #e9bf02; }
.c4 { background: #f25e6a; }
.c5 { background: #80b34e; }
.c6 { background: #ae4bd1; }
.c7 { background: #005ea6; }
.next { display: flex; align-items: center; height: 132px; padding-left: 174px; color: #111; font-size: 18.300px; font-weight: 700; }
.next svg { width: 15.500px; height: 27.500px; margin-left: 34px; }
```
